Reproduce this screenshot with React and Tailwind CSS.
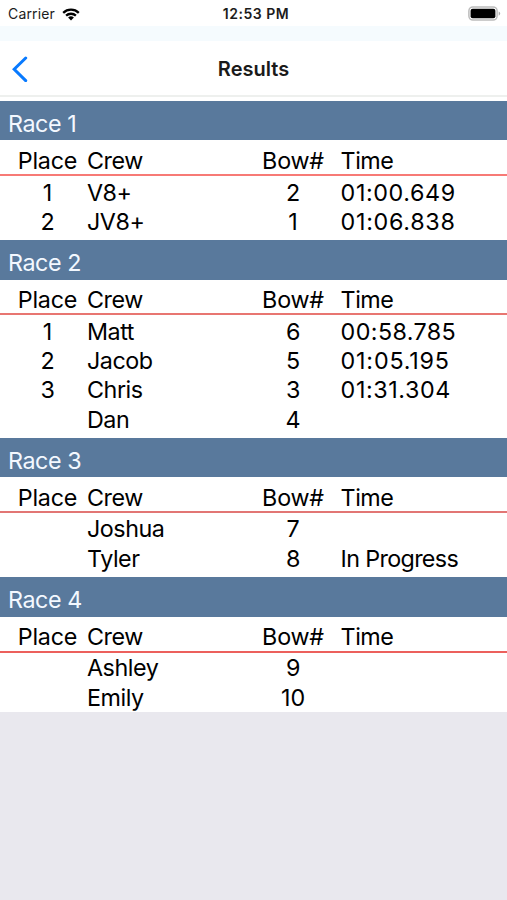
const races = [
  {
    name: 'Race 1',
    bar: 'h-[39px]',
    head: 'h-[34px] pt-[7.4px]',
    line: 'h-[2px] bg-[#f77a76]',
    rows: [
      ['1', 'V8+', '2', '01:00.649', 'tracking-[0.6px]'],
      ['2', 'JV8+', '1', '01:06.838', 'tracking-[0.7px]'],
    ],
  },
  {
    name: 'Race 2',
    bar: 'h-[40px] pb-[1px]',
    head: 'h-[33px] pt-[6px]',
    line: 'h-[2px] bg-[#e87671]',
    rows: [
      ['1', 'Matt', '6', '00:58.785', 'tracking-[0.4px]'],
      ['2', 'Jacob', '5', '01:05.195', 'tracking-[0.8px]'],
      ['3', 'Chris', '3', '01:31.304', 'tracking-[0.6px]'],
      ['', 'Dan', '4', ''],
    ],
  },
  {
    name: 'Race 3',
    bar: 'h-[39px]',
    head: 'h-[34px] pt-[7.4px]',
    line: 'h-[2px] bg-[#e27674]',
    rows: [
      ['', 'Joshua', '7', ''],
      ['', 'Tyler', '8', 'In Progress', 'tracking-[-0.65px]'],
    ],
  },
  {
    name: 'Race 4',
    bar: 'h-[40px]',
    head: 'h-[34px] pt-[6px]',
    line: 'h-[2px] -mb-px bg-[#ec605c]',
    rows: [['', 'Ashley', '9', ''], ['', 'Emily', '10', '']],
  },
];

function Row({ cells, className }) {
  return (
    <div className={`grid grid-cols-[79px_166px_80px_1fr] items-center pl-2 whitespace-nowrap text-[23.3px] leading-none tracking-[-0.2px] ${className}`}>
      <span className="text-center">{cells[0]}</span>
      <span className="tracking-[-0.45px]">{cells[1]}</span>
      <span className="text-center">{cells[2]}</span>
      <span className={`pl-[7.6px] ${cells[4] || ''}`}>{cells[3]}</span>
    </div>
  );
}

function StatusBar() {
  return (
    <div className="grid h-[26px] grid-cols-3 items-center pl-2 pr-[6px] text-[#1c1c1c]">
      <div className="flex items-center gap-[7px] pt-[2px]">
        <span className="text-[14px] leading-none tracking-[0.15px]">Carrier</span>
        <svg width="18" height="13" viewBox="0 0 18 13" fill="none" stroke="#000" strokeWidth="2.3">
          <path d="M1.2 4.8a11.3 11.3 0 0 1 15.6 0" />
          <path d="M4.1 7.7a7.1 7.1 0 0 1 9.8 0" />
          <path d="M9 12.4L6.1 9.6a4.2 4.2 0 0 1 5.8 0z" fill="#000" stroke="none" />
        </svg>
      </div>
      <span className="pl-[3px] pt-[2px] text-center text-[14px] font-semibold leading-none tracking-[0.5px] whitespace-nowrap">12:53 PM</span>
      <svg className="justify-self-end" width="33" height="15" viewBox="0 0 33 15">
        <rect x="0.9" y="0.9" width="28.2" height="13.2" rx="4" fill="#fff" stroke="#bcbcbc" strokeWidth="1.5" />
        <rect x="2.6" y="2.7" width="24.8" height="9.6" rx="2" fill="#000" />
        <path d="M30.7 5.4a2.4 2.4 0 0 1 0 4.4z" fill="#aaa" />
      </svg>
    </div>
  );
}

export default function App() {
  return (
    <div className="flex h-[900px] w-[507px] flex-col overflow-hidden bg-[#e9e8ee] font-['Inter',sans-serif] text-black">
      <header className="h-[101px] shrink-0 bg-white">
        <StatusBar />
        <div className="h-[15px] bg-[#f5fbfe]" />
        <div className="grid h-[56px] grid-cols-[40px_1fr_40px] items-center border-b-2 border-[#eef0ee] pt-[2px]">
          <svg className="ml-3" width="17" height="26" viewBox="0 0 17 26" fill="none" stroke="#087aff" strokeWidth="3" strokeLinecap="round">
            <path d="M13.7 2L2.2 13.2L13.7 24.6" />
          </svg>
          <h1 className="text-center text-[20px] font-semibold leading-none text-[#1a1a1a]">Results</h1>
        </div>
      </header>
      <main className="shrink-0 bg-white">
        {races.map((race, i) => (
          <section key={race.name} className={i === races.length - 1 ? '' : 'pb-[4px]'}>
            <h2 className={`flex items-center bg-[#59799c] pl-2 pt-[7px] text-[23.3px] leading-none tracking-[-0.45px] text-[#f3f8ff] ${race.bar}`}>
              {race.name}
            </h2>
            <Row cells={['Place', 'Crew', 'Bow#', 'Time', 'tracking-[-0.5px]']} className={race.head} />
            <div className={race.line} />
            <div className="pt-[1.33px]">
              {race.rows.map((cells) => (
                <Row key={cells[1]} cells={cells} className="h-[29.33px] pt-[0.6px]" />
              ))}
            </div>
          </section>
        ))}
      </main>
    </div>
  );
}
